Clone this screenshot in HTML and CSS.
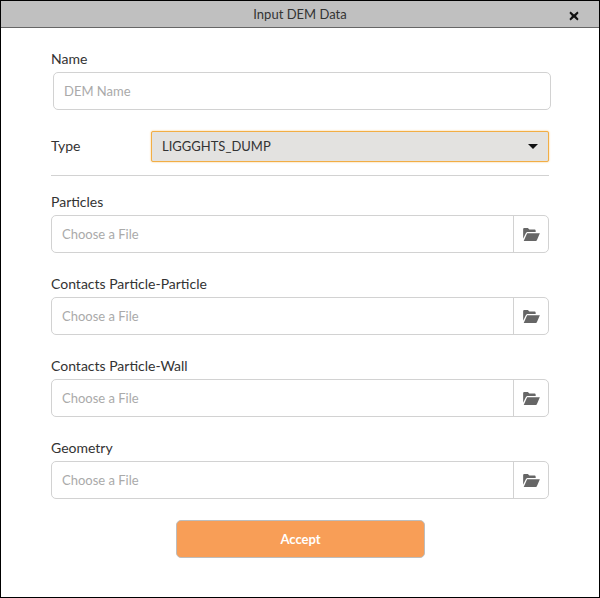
FILE: index.html
```html
<!DOCTYPE html>
<html lang="en">
<head>
    <meta charset="UTF-8">
    <title>Input DEM Data</title>
    <link rel="stylesheet" href="styles.css">
</head>
<body>
    <div class="dialog">
        <div class="titlebar">
            <span>Input DEM Data</span>
            <svg class="close" viewBox="0 0 10 10" width="10" height="10"><path d="M1.6 0.6 5 3.4 8.4 0.6 9.6 2 7 5 9.6 8 8.4 9.4 5 6.6 1.6 9.4 0.4 8 3 5 0.4 2z"/></svg>
        </div>
        <div class="content">
            <div class="name-block">
                <label class="field-label">Name</label>
                <input class="name-input" type="text" placeholder="DEM Name">
            </div>
            <div class="type-row">
                <label class="type-label">Type</label>
                <div class="type-select">
                    <span>LIGGGHTS_DUMP</span>
                    <span class="caret"></span>
                </div>
            </div>
            <hr class="divider">
            <div class="file-block">
                <label class="field-label">Particles</label>
                <div class="file-input">
                    <span class="file-text">Choose a File</span>
                    <span class="file-btn"><svg viewBox="0 0 18 14" width="17" height="13"><path d="M0 11.5V1.4C0 .6.6 0 1.4 0h3.7l1.6 1.7h5.4c.8 0 1.4.6 1.4 1.4v1.2H5.2c-1 0-1.8.5-2.3 1.4z"/><path d="M4.3 5.6H18l-3.2 7.5c-.2.5-.6.9-1.2.9H.6z"/></svg></span>
                </div>
            </div>
            <div class="file-block">
                <label class="field-label">Contacts Particle-Particle</label>
                <div class="file-input">
                    <span class="file-text">Choose a File</span>
                    <span class="file-btn"><svg viewBox="0 0 18 14" width="17" height="13"><path d="M0 11.5V1.4C0 .6.6 0 1.4 0h3.7l1.6 1.7h5.4c.8 0 1.4.6 1.4 1.4v1.2H5.2c-1 0-1.8.5-2.3 1.4z"/><path d="M4.3 5.6H18l-3.2 7.5c-.2.5-.6.9-1.2.9H.6z"/></svg></span>
                </div>
            </div>
            <div class="file-block">
                <label class="field-label">Contacts Particle-Wall</label>
                <div class="file-input">
                    <span class="file-text">Choose a File</span>
                    <span class="file-btn"><svg viewBox="0 0 18 14" width="17" height="13"><path d="M0 11.5V1.4C0 .6.6 0 1.4 0h3.7l1.6 1.7h5.4c.8 0 1.4.6 1.4 1.4v1.2H5.2c-1 0-1.8.5-2.3 1.4z"/><path d="M4.3 5.6H18l-3.2 7.5c-.2.5-.6.9-1.2.9H.6z"/></svg></span>
                </div>
            </div>
            <div class="file-block">
                <label class="field-label">Geometry</label>
                <div class="file-input">
                    <span class="file-text">Choose a File</span>
                    <span class="file-btn"><svg viewBox="0 0 18 14" width="17" height="13"><path d="M0 11.5V1.4C0 .6.6 0 1.4 0h3.7l1.6 1.7h5.4c.8 0 1.4.6 1.4 1.4v1.2H5.2c-1 0-1.8.5-2.3 1.4z"/><path d="M4.3 5.6H18l-3.2 7.5c-.2.5-.6.9-1.2.9H.6z"/></svg></span>
                </div>
            </div>
            <div class="actions">
                <button class="accept">Accept</button>
            </div>
        </div>
    </div>
</body>
</html>
```

FILE: styles.css
```css
* {
    box-sizing: border-box;
}

body {
    margin: 0;
    background: #fff;
    font-family: Lato, "Liberation Sans", sans-serif;
    font-size: 14px;
    color: #333;
    overflow: hidden;
}

.dialog {
    width: 600px;
    height: 598px;
    border: 1px solid #000;
    background: #fff;
}

.titlebar {
    height: 27px;
    background: #c0c0c0;
    border-bottom: 1px solid #666;
    display: flex;
    align-items: center;
    justify-content: center;
    position: relative;
    font-size: 13px;
}

.close {
    position: absolute;
    right: 20px;
    top: 10px;
    fill: #111;
}

.content {
    padding: 0 49px 0 50px;
}

.field-label {
    display: block;
    height: 18px;
    line-height: 18px;
}

.name-block {
    padding-top: 22px;
}

.name-block .field-label {
    height: 22px;
}

.name-input {
    display: block;
    width: 498px;
    height: 38px;
    margin-left: 2px;
    padding: 0 10px;
    border: 1px solid #d2d2d2;
    border-radius: 5px;
    font: 13px Lato, "Liberation Sans", sans-serif;
    outline: none;
}

.name-input::placeholder,
.file-text {
    color: #aaa;
}

.type-row {
    display: flex;
    align-items: center;
    margin-top: 21px;
}

.type-label {
    width: 100px;
    padding-bottom: 2px;
}

.type-select {
    width: 398px;
    height: 31px;
    display: flex;
    align-items: center;
    justify-content: space-between;
    padding: 0 10px 2px;
    font-size: 13px;
    background: #e3e2e0;
    border: 1px solid #f2ae45;
    border-radius: 2px;
    box-shadow: 0 0 2px #f5c070;
}

.caret {
    margin-top: 2px;
    border-left: 5px solid transparent;
    border-right: 5px solid transparent;
    border-top: 5px solid #111;
}

.divider {
    width: 498px;
    height: 1px;
    margin: 13px 0 0;
    border: 0;
    background: #d2d2d2;
}

.file-block {
    padding-top: 22px;
}

.divider + .file-block {
    padding-top: 17px;
}

.file-block .field-label {
    height: 22px;
}

.file-input {
    width: 498px;
    height: 38px;
    display: flex;
    align-items: center;
    border: 1px solid #d2d2d2;
    border-radius: 5px;
    font-size: 13px;
}

.file-text {
    flex: 1;
    padding-left: 10px;
}

.file-btn {
    width: 35px;
    height: 100%;
    display: flex;
    align-items: center;
    justify-content: center;
    border-left: 1px solid #d2d2d2;
}

.file-btn svg {
    fill: #666;
}

.actions {
    display: flex;
    justify-content: center;
    padding-top: 21px;
}

.accept {
    width: 249px;
    height: 38px;
    padding: 0;
    background: #f89e57;
    border: 1px solid #bdbdbd;
    border-radius: 5px;
    color: #fff;
    font: 700 13px Lato, "Liberation Sans", sans-serif;
}
```
